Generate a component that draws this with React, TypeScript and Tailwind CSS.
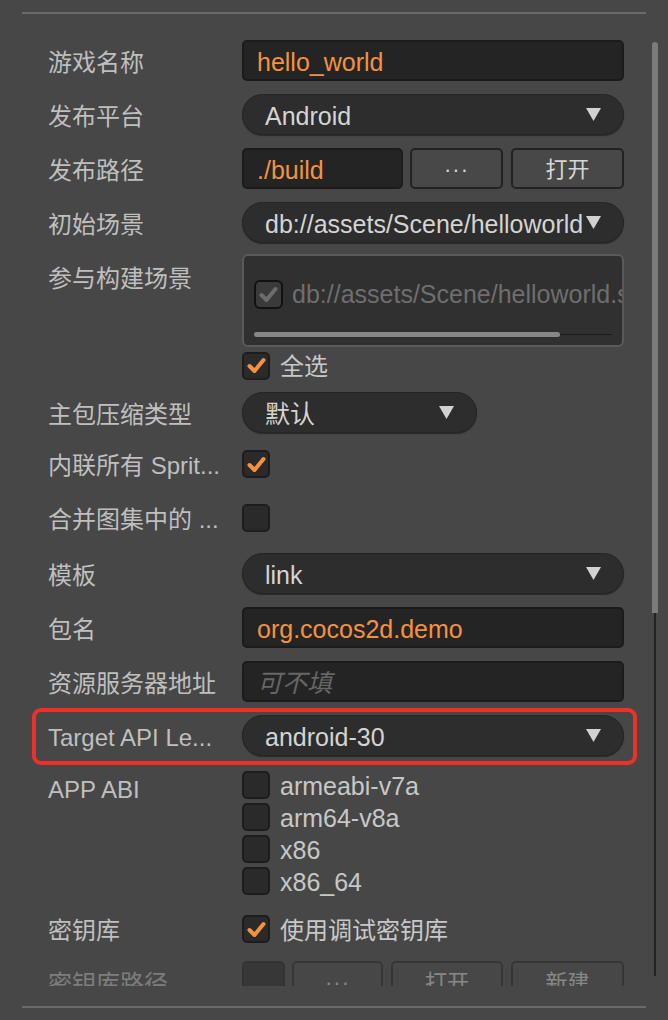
import React from 'react';

const font = { fontFamily: '"Liberation Sans", "Noto Sans CJK SC", sans-serif' };

const Arrow = () => (
    <svg width="15" height="13" viewBox="0 0 15 13" className="shrink-0">
        <polygon points="0,0 15,0 7.5,13" fill="#d2d2d2" />
    </svg>
);

const Check = ({ color }: { color: string }) => (
    <svg width="19" height="17" viewBox="0 0 19 17">
        <path d="M2.5 9 L7.5 14 L16.5 3" fill="none" stroke={color} strokeWidth="4" strokeLinecap="round" strokeLinejoin="round" />
    </svg>
);

const Checkbox = ({ checked, disabled }: { checked?: boolean; disabled?: boolean }) => (
    <div
        className={
            disabled
                ? "w-[29px] h-[29px] shrink-0 rounded-[6px] bg-[#3a3a3a] border-2 border-[#111] flex items-center justify-center"
                : "w-[28px] h-[28px] shrink-0 rounded-[5px] bg-[#2a2a2a] border-2 border-[#1d1d1d] flex items-center justify-center"
        }
    >
        {checked && <Check color={disabled ? "#6c6c6c" : "#f5923e"} />}
    </div>
);

const Label = ({ text, className = "" }: { text: string; className?: string }) => (
    <div className={"w-[194px] shrink-0 pt-[4px] text-[24px] text-[#bfbfbf] whitespace-nowrap " + className}>{text}</div>
);

const Input = ({ value, placeholder, className = "" }: { value?: string; placeholder?: string; className?: string }) => (
    <div className={"min-w-0 h-[41px] rounded-[5px] bg-[#242424] border-2 border-[#1b1b1b] px-[13px] pt-[4px] flex items-center text-[25px] whitespace-nowrap overflow-hidden " + className}>
        {value ? <span className="text-[#f5923e]">{value}</span> : <span className="text-[#666] italic">{placeholder}</span>}
    </div>
);

const Select = ({ value, className = "" }: { value: string; className?: string }) => (
    <div className={"min-w-0 h-[41px] rounded-full bg-[#2d2d2d] border border-[#252525] shadow-[0_1px_1px_#2a2a2a] pl-[22px] pr-[22px] flex items-center " + className}>
        <span className="flex-1 min-w-0 mr-[4px] pt-[4px] overflow-hidden whitespace-nowrap text-[25px] text-[#d4d4d4]">{value}</span>
        <Arrow />
    </div>
);

const Button = ({ text, className = "" }: { text: string; className?: string }) => (
    <div className={"min-w-0 h-[41px] rounded-[5px] bg-[#484848] border-2 border-[#222] pt-[2px] flex items-center justify-center text-[22px] text-[#d6d6d6] " + className}>
        {text}
    </div>
);

const CheckItem = ({ text, checked }: { text: string; checked?: boolean }) => (
    <div className="h-[32px] flex items-center gap-[10px]">
        <Checkbox checked={checked} />
        <span className="pt-[3px] text-[25px] text-[#c8c8c8] whitespace-nowrap">{text}</span>
    </div>
);

const App = () => {
    return (
        <div className="w-[668px] h-[1020px] bg-[#474747] flex flex-col overflow-hidden" style={font}>
            <div className="shrink-0 h-[2px] mt-[12px] mx-[22px] bg-[#6a6a6a]" />

            <div className="shrink-0 flex h-[972px] overflow-hidden">
                <div className="flex-1 min-w-0 pl-[48px] pr-[28px] pt-[26px] flex flex-col gap-[13px]">
                    <div className="shrink-0 flex items-center h-[41px]">
                        <Label text="游戏名称" />
                        <Input value="hello_world" className="flex-1" />
                    </div>

                    <div className="shrink-0 flex items-center h-[41px]">
                        <Label text="发布平台" />
                        <Select value="Android" className="flex-1" />
                    </div>

                    <div className="shrink-0 flex items-center h-[41px]">
                        <Label text="发布路径" />
                        <div className="flex-1 min-w-0 flex gap-[7px]">
                            <Input value="./build" className="w-[161px] shrink-0" />
                            <Button text="···" className="w-[93px] shrink-0 tracking-[1px]" />
                            <Button text="打开" className="flex-1 ml-[1px]" />
                        </div>
                    </div>

                    <div className="shrink-0 flex items-center h-[41px]">
                        <Label text="初始场景" />
                        <Select value="db://assets/Scene/helloworld.scene" className="flex-1" />
                    </div>

                    <div className="shrink-0 flex items-start -mt-[2px]">
                        <Label text="参与构建场景" className="h-[41px] mt-[2px] flex items-center" />
                        <div className="flex-1 min-w-0 flex flex-col gap-[5px]">
                            <div className="h-[93px] rounded-[6px] bg-[#303030] border-2 border-[#5a5a5a] overflow-hidden flex flex-col pl-[10px]">
                                <div className="mt-[20px] flex items-center gap-[9px] whitespace-nowrap">
                                    <Checkbox checked disabled />
                                    <span className="text-[25px] text-[#6e6e6e]">db://assets/Scene/helloworld.scene</span>
                                </div>
                                <div className="mt-auto mb-[8px] pr-[10px] flex items-center h-[5px]">
                                    <div className="w-[306px] h-[5px] rounded-full bg-[#878787]" />
                                    <div className="flex-1 h-[1px] bg-[#1c1c1c]" />
                                </div>
                            </div>
                            <div className="flex items-center gap-[10px] h-[27px]">
                                <Checkbox checked />
                                <span className="pt-[3px] text-[24px] text-[#c8c8c8]">全选</span>
                            </div>
                        </div>
                    </div>

                    <div className="shrink-0 flex items-center h-[41px]">
                        <Label text="主包压缩类型" />
                        <Select value="默认" className="w-[235px]" />
                    </div>

                    <div className="shrink-0 flex items-center h-[36px]">
                        <Label text="内联所有 Sprit..." />
                        <Checkbox checked />
                    </div>

                    <div className="shrink-0 flex items-center h-[45px]">
                        <Label text="合并图集中的 ..." />
                        <Checkbox />
                    </div>

                    <div className="shrink-0 flex items-center h-[41px]">
                        <Label text="模板" />
                        <Select value="link" className="flex-1" />
                    </div>

                    <div className="shrink-0 flex items-center h-[41px]">
                        <Label text="包名" />
                        <Input value="org.cocos2d.demo" className="flex-1" />
                    </div>

                    <div className="shrink-0 flex items-center h-[41px]">
                        <Label text="资源服务器地址" />
                        <Input placeholder="可不填" className="flex-1" />
                    </div>

                    <div className="shrink-0 relative flex items-center h-[41px]">
                        <Label text="Target API Le..." />
                        <Select value="android-30" className="flex-1" />
                        <div className="absolute -left-[16px] -right-[13px] -top-[7px] -bottom-[9px] border-4 border-[#ee3128] rounded-[9px]" />
                    </div>

                    <div className="shrink-0 flex items-start">
                        <Label text="APP ABI" className="h-[34px] leading-[34px]" />
                        <div className="flex flex-col">
                            <CheckItem text="armeabi-v7a" />
                            <CheckItem text="arm64-v8a" />
                            <CheckItem text="x86" />
                            <CheckItem text="x86_64" />
                        </div>
                    </div>

                    <div className="shrink-0 flex items-center h-[38px]">
                        <Label text="密钥库" />
                        <div className="flex items-center gap-[10px]">
                            <Checkbox checked />
                            <span className="pt-[3px] text-[24px] text-[#c8c8c8]">使用调试密钥库</span>
                        </div>
                    </div>

                    <div className="shrink-0 flex items-center h-[41px] opacity-45">
                        <Label text="密钥库路径" />
                        <div className="flex-1 min-w-0 flex gap-[7px]">
                            <Input value=" " className="w-[43px] shrink-0" />
                            <Button text="···" className="w-[91px] shrink-0 tracking-[1px]" />
                            <Button text="打开" className="w-[112px] shrink-0 ml-[1px]" />
                            <Button text="新建" className="flex-1 ml-[1px]" />
                        </div>
                    </div>
                </div>

                <div className="shrink-0 w-[6px] mr-[10px] pt-[28px] flex flex-col items-center">
                    <div className="shrink-0 w-[6px] h-[571px] rounded-t-[3px] bg-[#7b7b7b]" />
                    <div className="shrink-0 w-[2px] h-[363px] bg-[#232323]" />
                </div>
            </div>

            <div className="shrink-0 h-[2px] mt-[20px] mx-[22px] bg-[#6a6a6a]" />
        </div>
    );
};

export default App;
